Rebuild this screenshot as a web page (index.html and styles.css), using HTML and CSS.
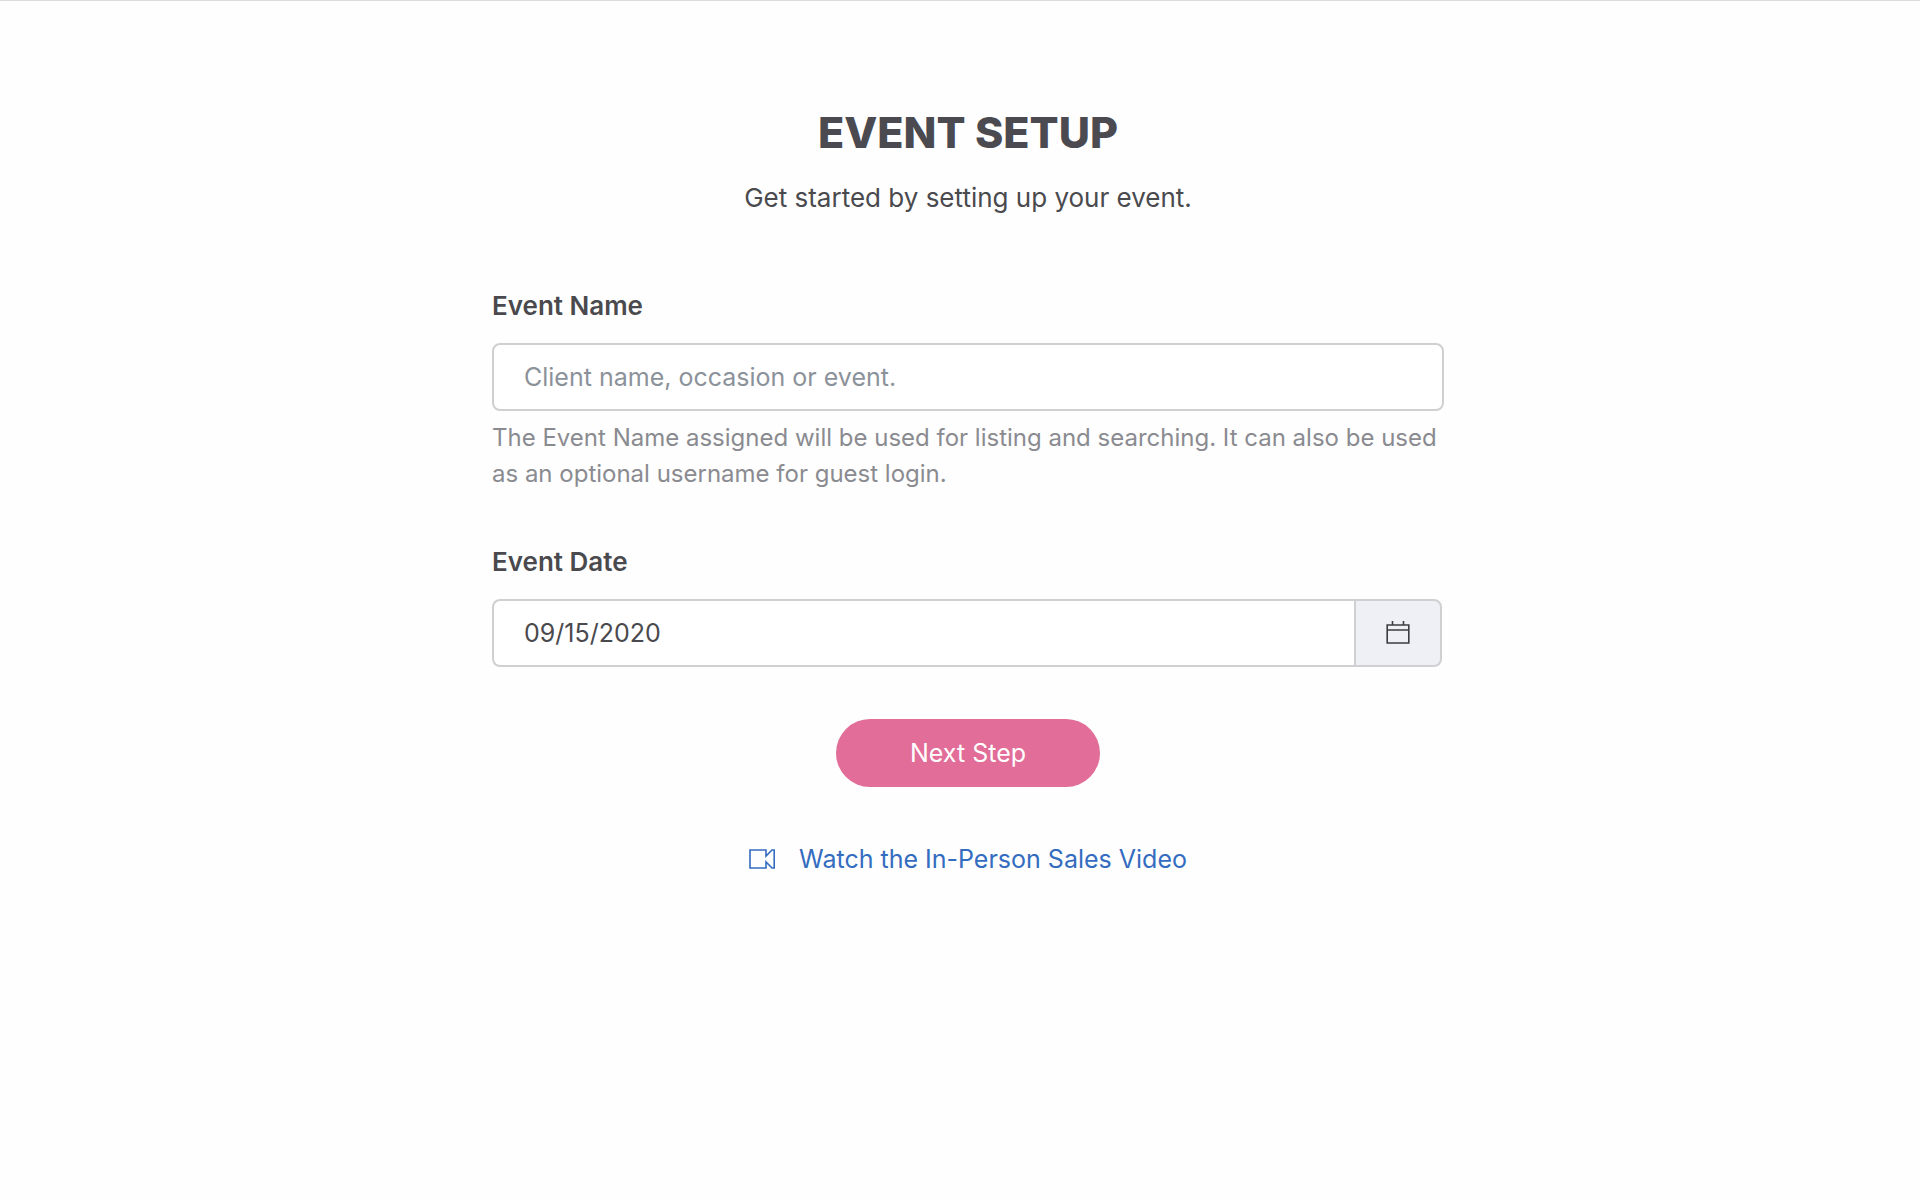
FILE: index.html
```html
<!DOCTYPE html>
<html lang="en">
<head>
  <meta charset="utf-8">
  <meta name="viewport" content="width=device-width, initial-scale=1">
  <title>Event Setup</title>
  <link rel="stylesheet" href="styles.css">
</head>
<body>
  <main class="setup">
    <header class="setup-header">
      <h1 class="setup-title">EVENT SETUP</h1>
      <p class="setup-lead">Get started by setting up your event.</p>
    </header>
    <form class="setup-form">
      <div class="field">
        <label class="field-label" for="event-name">Event Name</label>
        <input class="field-input" id="event-name" type="text" placeholder="Client name, occasion or event." aria-describedby="event-name-help">
        <p class="field-help" id="event-name-help">The Event Name assigned will be used for listing and searching. It can also be used as an optional username for guest login.</p>
      </div>
      <div class="field">
        <label class="field-label" for="event-date">Event Date</label>
        <div class="input-group">
          <input class="field-input" id="event-date" type="text" value="09/15/2020">
          <button class="input-addon" type="button" aria-label="Choose date">
            <svg width="24" height="24" viewBox="0 0 24 24" fill="none" stroke="currentColor" stroke-width="1.6" aria-hidden="true">
              <path d="M1.200 4H22.800V22H1.200ZM1.200 9H22.800M6.500 0V4M17.500 0V4"/>
            </svg>
          </button>
        </div>
      </div>
      <button class="submit" type="submit">Next Step</button>
    </form>
    <a class="video-link" href="#video">
      <svg width="26" height="20" viewBox="0 0 26 20" fill="none" stroke="currentColor" stroke-width="1.6" aria-hidden="true">
        <path d="M1 1H17V7L23 1H25.200V19H23L17 13V19H1Z"/>
      </svg>
      Watch the In-Person Sales Video
    </a>
  </main>
</body>
</html>
```
FILE: styles.css
```css
* {
  box-sizing: border-box;
}

body {
  margin: 0;
  border-top: 1px solid #dcdcdc;
  background: #fefefe;
  color: #4a4a4e;
  font-family: Inter, "Liberation Sans", sans-serif;
  font-size: 25px;
  line-height: 36px;
}

h1,
p {
  margin: 0;
}

input,
button {
  font: inherit;
  color: inherit;
}

.setup {
  display: flex;
  flex-direction: column;
  align-items: center;
  padding: 103px 16px 64px 32px;
}

.setup-header {
  display: flex;
  flex-direction: column;
  gap: 20px;
  margin-bottom: 72px;
  text-align: center;
}

.setup-title {
  color: #4a4a50;
  font-size: 43px;
  font-weight: 800;
  line-height: 56px;
}

.setup-lead {
  font-size: 26px;
}

.setup-form {
  display: flex;
  flex-direction: column;
  align-items: center;
  gap: 52px;
  width: 100%;
  max-width: 952px;
}

.field {
  display: flex;
  flex-direction: column;
  width: 100%;
}

.field-label {
  margin-bottom: 19px;
  font-size: 26px;
  font-weight: 600;
}

.field-input {
  width: 100%;
  min-width: 0;
  height: 68px;
  padding: 0 30px;
  border: 2px solid #d0d0d2;
  border-radius: 8px;
  background: #fff;
}

.field-input::placeholder {
  color: #8c929a;
  opacity: 1;
}

.field-help {
  margin-top: 9px;
  color: #8a8b90;
  font-size: 24px;
}

.input-group {
  display: flex;
  margin-right: 2px;
}

.input-group .field-input {
  border-right: 0;
  border-radius: 8px 0 0 8px;
}

.input-addon {
  display: flex;
  flex: none;
  align-items: center;
  justify-content: center;
  width: 88px;
  padding: 0;
  border: 2px solid #d0d0d2;
  border-radius: 0 8px 8px 0;
  background: #eff0f5;
  color: #3c3c40;
}

.submit {
  width: 264px;
  height: 68px;
  border: 0;
  border-radius: 34px;
  background: #e16d98;
  color: #fff;
}

.video-link {
  display: flex;
  align-items: center;
  gap: 24px;
  margin-top: 54px;
  color: #346cc0;
  text-decoration: none;
}
```
